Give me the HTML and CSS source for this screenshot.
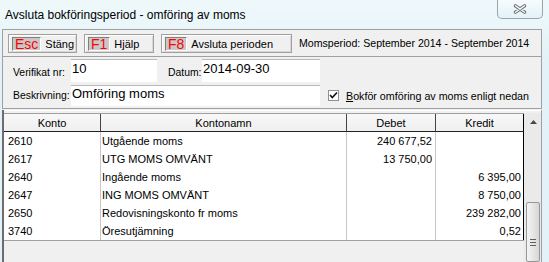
FILE: index.html
```html
<!DOCTYPE html>
<html lang="sv">
<head>
  <meta charset="UTF-8">
  <meta name="viewport" content="width=device-width, initial-scale=1.0">
  <title>Avsluta bokföringsperiod - omföring av moms</title>
  <link rel="stylesheet" href="styles.css">
</head>
<body>
  <div class="window">
    <div class="titlebar">
      <span class="title">Avsluta bokföringsperiod - omföring av moms</span>
      <button class="close" title="Stäng">
        <svg width="14" height="10" viewBox="0 0 14 10">
          <path d="M2.5 1.8 L11.5 8.2 M11.5 1.8 L2.5 8.2" stroke="#6f7579" stroke-width="3.4" stroke-linecap="round" fill="none"/>
          <path d="M2.5 1.8 L11.5 8.2 M11.5 1.8 L2.5 8.2" stroke="#fff" stroke-width="1.4" stroke-linecap="round" fill="none"/>
        </svg>
      </button>
    </div>

    <div class="client">
      <!-- knappar -->
      <div class="toolbar">
        <button class="tbtn tbtn-esc"><span class="key">Esc</span>Stäng</button>
        <button class="tbtn"><span class="key">F1</span>Hjälp</button>
        <button class="tbtn tbtn-wide"><span class="key">F8</span>Avsluta perioden</button>
        <span class="period">Momsperiod: September 2014 - September 2014</span>
      </div>

      <!-- verifikat -->
      <div class="form">
        <div class="form__row form__row-top">
          <label class="form__label">Verifikat nr:</label>
          <input class="field field-nr" value="10">
          <label class="form__label form__label-datum">Datum:</label>
          <input class="field field-datum" value="2014-09-30">
        </div>
        <div class="form__row">
          <label class="form__label">Beskrivning:</label>
          <input class="field field-text" value="Omföring moms">
          <span class="check">
            <svg width="9" height="9" viewBox="0 0 9 9">
              <path d="M1 4 L3.3 6.5 L8 1.5" stroke="#111" stroke-width="1.6" fill="none"/>
            </svg>
          </span>
          <span class="check__label"><u>B</u>okför omföring av moms enligt nedan</span>
        </div>
      </div>

      <!-- konteringar -->
      <div class="grid">
        <div class="grid__body">
          <table class="rows">
            <thead>
              <tr>
                <th class="col-konto">Konto</th>
                <th class="col-namn">Kontonamn</th>
                <th class="col-debet">Debet</th>
                <th class="col-kredit">Kredit</th>
              </tr>
            </thead>
            <tbody>
              <tr><td class="col-konto">2610</td><td class="col-namn">Utgående moms</td><td class="col-debet">240 677,52</td><td class="col-kredit"></td></tr>
              <tr><td class="col-konto">2617</td><td class="col-namn">UTG MOMS OMVÄNT</td><td class="col-debet">13 750,00</td><td class="col-kredit"></td></tr>
              <tr><td class="col-konto">2640</td><td class="col-namn">Ingående moms</td><td class="col-debet"></td><td class="col-kredit">6 395,00</td></tr>
              <tr><td class="col-konto">2647</td><td class="col-namn">ING MOMS OMVÄNT</td><td class="col-debet"></td><td class="col-kredit">8 750,00</td></tr>
              <tr><td class="col-konto">2650</td><td class="col-namn">Redovisningskonto fr moms</td><td class="col-debet"></td><td class="col-kredit">239 282,00</td></tr>
              <tr><td class="col-konto">3740</td><td class="col-namn">Öresutjämning</td><td class="col-debet"></td><td class="col-kredit">0,52</td></tr>
            </tbody>
          </table>
        </div>
        <div class="scrollbar">
          <span class="scrollbar__up">
            <svg width="7" height="4" viewBox="0 0 7 4"><path d="M0 4 L3.5 0 L7 4 Z" fill="#4a4a4a"/></svg>
          </span>
          <span class="scrollbar__thumb">
            <span class="grip"></span>
            <span class="grip"></span>
            <span class="grip"></span>
          </span>
        </div>
      </div>
    </div>
  </div>
</body>
</html>
```

FILE: styles.css
```css
* {
  box-sizing: border-box;
}
body {
  margin: 0;
  width: 549px;
  height: 262px;
  overflow: hidden;
  font-family: "Liberation Sans", Arial, sans-serif;
  font-size: 11px;
  color: #000;
  background: #e2f2f8;
}

.window {
  height: 262px;
  background: linear-gradient(#eff9fc, #e2f2f8 60px);
}

/* titelrad */
.titlebar {
  position: relative;
  height: 29px;
  padding: 8px 0 0 5px;
}
.title {
  font-size: 12px;
  color: #000;
}
.close {
  position: absolute;
  top: 0;
  left: 497px;
  width: 46px;
  height: 19px;
  padding: 0;
  border: 1px solid #97a6ae;
  border-top: 0;
  border-radius: 0 0 5px 5px;
  background: linear-gradient(#f6fcfe, #e4f1f6);
  display: flex;
  align-items: center;
  justify-content: center;
}

.client {
  margin-left: 2px;
  width: 540px;
  height: 233px;
  background: #f0f0f0;
  display: flex;
  flex-direction: column;
}

/* knappar */
.toolbar {
  height: 29px;
  border: 1px solid #a0a0a0;
  display: flex;
  align-items: flex-start;
  gap: 7px;
  padding: 4px 0 0 5px;
}
.tbtn {
  width: 69px;
  height: 19px;
  padding: 0 0 0 3px;
  border: 1px solid #a0a0a0;
  box-shadow: inset 1px 1px #fff, inset -1px -1px #d8d8d8;
  background: #f0f0f0;
  font: inherit;
  color: #000;
  display: flex;
  align-items: center;
  text-align: left;
}
.tbtn + .tbtn {
  width: 70px;
}
.tbtn.tbtn-wide {
  width: 131px;
}
.key {
  height: 14px;
  padding: 0 2px;
  margin-right: 4px;
  background: #c8c8c8;
  border: 1px solid;
  border-color: #808080 #fff #fff #808080;
  color: #f00;
  font-size: 14px;
  line-height: 12px;
}
.period {
  align-self: center;
  margin-top: -4px;
  font-size: 10.6px;
}

/* verifikat */
.form {
  height: 55px;
  border: 1px solid #a0a0a0;
  border-top: 0;
  padding: 2px 0 0 10px;
  display: flex;
  flex-direction: column;
  gap: 3px;
}
.form__row {
  display: flex;
  align-items: center;
  height: 21px;
}
.form__row-top {
  height: 23px;
}
.form__row-top .form__label {
  padding-top: 5px;
}
.form__label {
  width: 58px;
  white-space: nowrap;
  font-size: 10.4px;
}
.form__label-datum {
  width: 34px;
  margin-left: 11px;
}
.field {
  height: 100%;
  border: 0;
  border-top: 1px solid #b9b9b9;
  background: #fff;
  font-family: inherit;
  font-size: 13px;
  color: #000;
  padding: 0 2px 5px 1px;
  outline: none;
}
.field-nr {
  width: 86px;
}
.field-datum {
  width: 118px;
}
.field-text {
  width: 249px;
}
.check {
  width: 11px;
  height: 11px;
  margin: 1px 0 0 8px;
  border: 1px solid #8e8f8f;
  background: #fff;
  display: flex;
  align-items: center;
  justify-content: center;
}
.check__label {
  margin: 1px 0 0 7px;
  white-space: nowrap;
  font-size: 10.7px;
}

/* konteringar */
.grid {
  flex: 1;
  display: flex;
  margin-top: 1px;
  padding-top: 3px;
  border-left: 2px solid #6d6d6d;
  border-right: 1px solid #a0a0a0;
  box-shadow: inset 0 1px #fff;
}
.grid__body {
  width: 520px;
  border-top: 1px solid #a0a0a0;
}
.rows {
  width: 520px;
  table-layout: fixed;
  border-collapse: separate;
  border-spacing: 0;
  background: #fff;
  border-bottom: 1px solid #a0a0a0;
}
.rows th,
.rows td {
  height: 18px;
  padding: 0 2px;
  white-space: nowrap;
  overflow: hidden;
  border-right: 1px solid #c8c8c8;
  font-weight: normal;
}
.rows th {
  height: 18px;
  background: linear-gradient(#f8f8f8, #efefef);
  border-right-color: #444;
  border-bottom: 1px solid #222;
  text-align: center;
}
.rows .col-kredit {
  border-right-color: #000;
}
.col-konto {
  width: 97px;
}
td.col-konto {
  padding-left: 4px;
}
.col-namn {
  width: 246px;
}
td.col-namn {
  padding-left: 1px;
}
.col-debet {
  width: 89px;
}
.col-kredit {
  width: 88px;
}
td.col-debet,
td.col-kredit {
  text-align: right;
  padding-right: 3px;
}
td.col-kredit {
  padding-right: 2px;
}

.scrollbar {
  width: 17px;
  background: #eaeaea;
  display: flex;
  flex-direction: column;
}
.scrollbar__up {
  height: 17px;
  display: flex;
  align-items: center;
  justify-content: center;
  padding-left: 2px;
}
.scrollbar__thumb {
  width: 14px;
  height: 60px;
  margin: 72px 0 0 2px;
  border: 1px solid #979797;
  border-radius: 2px;
  background: linear-gradient(90deg, #f5f5f5, #e3e3e3 60%, #d6d6d6);
  display: flex;
  flex-direction: column;
  align-items: center;
  gap: 2px;
  padding-top: 36px;
}
.grip {
  width: 6px;
  height: 1px;
  background: #5f5f5f;
}
```
